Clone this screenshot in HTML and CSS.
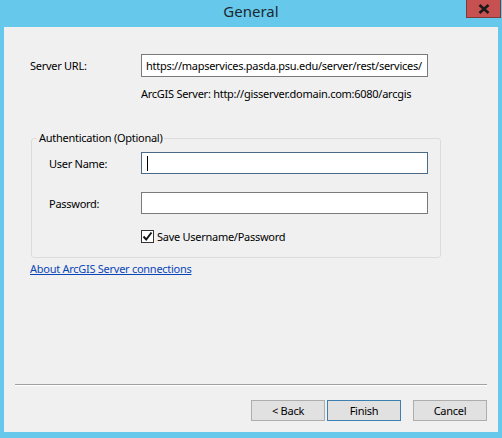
FILE: index.html
```html
<!DOCTYPE html>
<html>
<head>
<meta charset="utf-8">
<link rel="stylesheet" href="styles.css">
</head>
<body>
<div class="window">
  <div class="titlebar">
    <span class="title">General</span>
    <span class="close"><svg width="12" height="10" viewBox="0 0 12 10"><path d="M1.5 1 L10.5 9 M10.5 1 L1.5 9" stroke="#1a1a1a" stroke-width="2.6" stroke-linecap="butt"/></svg></span>
  </div>
  <div class="client">
    <div class="server-row">
      <span class="label">Server URL:</span>
      <div class="input">https://mapservices.pasda.psu.edu/server/rest/services/</div>
    </div>
    <div class="hint">ArcGIS Server: http://gisserver.domain.com:6080/arcgis</div>
    <fieldset class="group">
      <legend>Authentication (Optional)</legend>
      <div class="auth-row">
        <span class="label">User Name:</span>
        <div class="input focused"><span class="caret"></span></div>
      </div>
      <div class="auth-row">
        <span class="label">Password:</span>
        <div class="input"></div>
      </div>
      <div class="check-row">
        <span class="checkbox"><svg width="11" height="11" viewBox="0 0 11 11"><path d="M1.5 5.5 L4.2 8.5 L9.5 1.5" fill="none" stroke="#111" stroke-width="1.9"/></svg></span>
        <span>Save Username/Password</span>
      </div>
    </fieldset>
    <a class="link" href="#">About ArcGIS Server connections</a>
    <div class="spacer"></div>
    <div class="separator"></div>
    <div class="buttons">
      <button class="btn">&lt; Back</button>
      <button class="btn default">Finish</button>
      <button class="btn cancel">Cancel</button>
    </div>
  </div>
</div>
</body>
</html>
```
FILE: styles.css
```css
* { box-sizing: border-box; }
html, body { margin: 0; padding: 0; }
body {
  font-family: "Noto Sans", "DejaVu Sans", sans-serif;
  font-size: 11px;
  letter-spacing: -0.27px;
  color: #000;
}
.window {
  width: 502px;
  height: 438px;
  background: #66c9eb;
  display: flex;
  flex-direction: column;
  position: relative;
}
.titlebar {
  height: 27px;
  display: flex;
  align-items: center;
  justify-content: center;
  padding-bottom: 5px;
}
.title {
  font-size: 15px;
  letter-spacing: 0;
  color: #1d2730;
}
.close {
  position: absolute;
  top: 0;
  left: 466px;
  width: 35px;
  height: 18px;
  background: #c75050;
  border: 1px solid #7d3a3a;
  border-top: none;
  display: flex;
  align-items: center;
  justify-content: center;
}
.client {
  flex: 1;
  margin: 0 4px 6px 4px;
  background: #f0f0f0;
  display: flex;
  flex-direction: column;
  padding: 27px 11px 11px 26px;
}
.server-row {
  display: flex;
  align-items: center;
}
.label {
  width: 111px;
  flex: none;
}
.input {
  width: 287px;
  height: 23px;
  background: #fff;
  border: 1px solid #7a7a7a;
  padding: 0 4px;
  display: flex;
  align-items: center;
  white-space: nowrap;
  overflow: hidden;
}
.input.focused { border-color: #4a6a88; }
.caret {
  width: 1px;
  height: 15px;
  background: #000;
  margin-left: 1px;
}
.hint {
  margin: 9px 0 0 111px;
  line-height: 16px;
}
.group {
  margin: 29px 0 0 1px;
  width: 410px;
  height: 127px;
  border: 1px solid #dcdcdc;
  border-radius: 3px;
  padding: 7px 11px 0 17px;
  min-width: 0;
}
.group legend {
  padding: 0 2px;
  margin-left: -12px;
  line-height: 14px;
}
.auth-row {
  display: flex;
  align-items: center;
  margin-bottom: 18px;
}
.auth-row .label { width: 92px; }
.auth-row .input { height: 22px; }
.check-row {
  display: flex;
  align-items: center;
  margin: -3px 0 0 92px;
  gap: 3px;
}
.checkbox {
  width: 13px;
  height: 13px;
  border: 1px solid #333;
  background: #fff;
  display: flex;
  align-items: center;
  justify-content: center;
}
.link {
  margin-top: 3px;
  color: #0b46b8;
  text-decoration: underline;
  align-self: flex-start;
}
.spacer { flex: 1; }
.separator {
  height: 2px;
  border-top: 1px solid #a0a0a0;
  border-bottom: 1px solid #fff;
  margin-left: -15px;
}
.buttons {
  display: flex;
  justify-content: flex-end;
  margin-top: 14px;
  gap: 2px;
}
.btn {
  width: 74px;
  height: 21px;
  font-family: inherit;
  font-size: 11px;
  letter-spacing: -0.27px;
  color: #000;
  background: #e1e1e1;
  border: 1px solid #adadad;
  padding: 0;
}
.btn.default { border-color: #3c7fb1; }
.btn.cancel { margin-left: 10px; }
```
